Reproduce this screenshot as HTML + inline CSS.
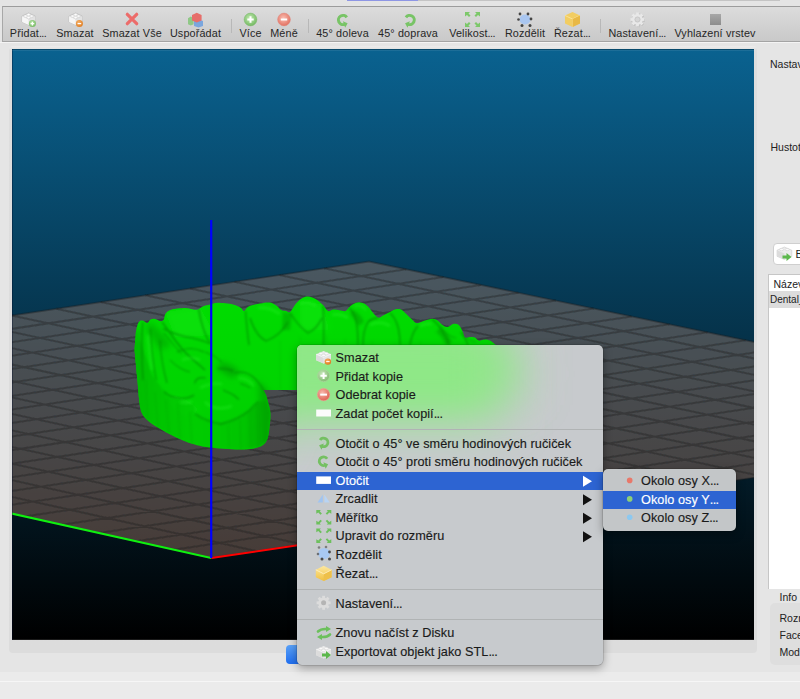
<!DOCTYPE html>
<html><head><meta charset="utf-8">
<style>
*{box-sizing:border-box}
html,body{margin:0;padding:0}
body{width:800px;height:699px;overflow:hidden;position:relative;background:#e5e5e5;font-family:"Liberation Sans",sans-serif;color:#1e1e1e}
.a{position:absolute}
.tl{position:absolute;top:28px;letter-spacing:0.15px;font-size:10.8px;line-height:11px;white-space:nowrap;color:#262626;text-align:center}
.sep{position:absolute;top:19px;width:1px;height:14px;background:#b8b8b8}
.mi{position:absolute;left:335.5px;font-size:12.7px;line-height:14px;white-space:nowrap;color:#1a1a1a;letter-spacing:0.05px;-webkit-text-stroke:0.15px currentColor}
.ic{position:absolute;left:315px;width:17px;height:17px}
.el{letter-spacing:-0.6px}
.rp{position:absolute;font-size:10.5px;line-height:12px;white-space:nowrap;color:#222}
</style></head>
<body>
<!-- top strip -->
<div class="a" style="left:0;top:0;width:800px;height:6px;background:#e4e4e4"></div>
<div class="a" style="left:347px;top:0;width:71px;height:1.2px;background:#8e96e4"></div>
<div class="a" style="left:418px;top:0;width:362px;height:1.2px;background:#c4c4c4"></div>
<!-- toolbar -->
<div class="a" style="left:2px;top:6px;width:798px;height:36px;border-top:1px solid #9c9c9c;border-left:1px solid #a8a8a8;border-bottom:1px solid #a4a4a4;background:linear-gradient(#dcdcdc,#c9c9c9)"></div>
<div class="a" style="left:0;top:42px;width:800px;height:1px;background:#f4f4f4"></div>

<!-- toolbar labels -->
<div class="tl" style="left:-22px;width:100px">Přidat<span class="el">...</span></div>
<div class="tl" style="left:25px;width:100px">Smazat</div>
<div class="tl" style="left:82px;width:100px">Smazat Vše</div>
<div class="tl" style="left:145.5px;width:100px">Uspořádat</div>
<div class="sep" style="left:231px"></div>
<div class="tl" style="left:200.5px;width:100px">Více</div>
<div class="tl" style="left:234px;width:100px">Méně</div>
<div class="sep" style="left:307.5px"></div>
<div class="tl" style="left:292.5px;width:100px">45° doleva</div>
<div class="tl" style="left:358px;width:100px">45° doprava</div>
<div class="tl" style="left:422px;width:100px">Velikost<span class="el">...</span></div>
<div class="tl" style="left:475px;width:100px">Rozdělit</div>
<div class="tl" style="left:522px;width:100px">Řezat<span class="el">...</span></div>
<div class="sep" style="left:600px"></div>
<div class="tl" style="left:587px;width:100px">Nastavení<span class="el">...</span></div>
<div class="tl" style="left:665px;width:100px">Vyhlazení vrstev</div>
<!-- toolbar icons -->
<svg class="a" style="left:0;top:0" width="800" height="45" viewBox="0 0 800 45">
<defs><filter id="tbl" x="-30%" y="-30%" width="160%" height="160%"><feGaussianBlur stdDeviation="0.35"/></filter>
<radialGradient id="gG" cx="0.45" cy="0.4" r="0.65"><stop offset="0" stop-color="#c4ecb4"/><stop offset="1" stop-color="#6cb45a"/></radialGradient>
<radialGradient id="gR" cx="0.45" cy="0.4" r="0.65"><stop offset="0" stop-color="#fac0b4"/><stop offset="1" stop-color="#e06a5a"/></radialGradient>
<radialGradient id="gO" cx="0.4" cy="0.35" r="0.7"><stop offset="0" stop-color="#f5b26a"/><stop offset="1" stop-color="#e07a1c"/></radialGradient>
<g id="brick">
<path d="M0.5 4.5 L7 1.5 L13.5 4.5 L13.5 10.5 L7 13.5 L0.5 10.5 Z" fill="#f2f2f2" stroke="#bdbdbd" stroke-width="0.9"/>
<path d="M0.5 4.5 L7 7.5 L7 13.5 L0.5 10.5Z" fill="#f6f6f6"/>
<path d="M7 7.5 L13.5 4.5 L13.5 10.5 L7 13.5Z" fill="#e2e2e2"/>
<path d="M0.5 4.5 L7 7.5 L13.5 4.5" fill="none" stroke="#d0d0d0" stroke-width="0.5"/>
<ellipse cx="4" cy="4.6" rx="1.8" ry="1.1" fill="#fff" stroke="#c8c8c8" stroke-width="0.5"/>
<ellipse cx="10" cy="4.6" rx="1.8" ry="1.1" fill="#fff" stroke="#c8c8c8" stroke-width="0.5"/>
<ellipse cx="7" cy="3.2" rx="1.8" ry="1.1" fill="#fff" stroke="#c8c8c8" stroke-width="0.5"/>
<ellipse cx="7" cy="6.2" rx="1.8" ry="1.1" fill="#fff" stroke="#c8c8c8" stroke-width="0.5"/>
</g>
</defs>
<use href="#brick" x="21.6" y="11.5" filter="url(#tbl)"/>
<circle cx="32.4" cy="23.6" r="3.5" fill="url(#gG)"/><path d="M30.6 23.6h3.6M32.4 21.8v3.6" stroke="#fff" stroke-width="1.2"/>
<use href="#brick" x="68.6" y="11.5" filter="url(#tbl)"/>
<circle cx="79.4" cy="23.6" r="3.5" fill="url(#gO)"/><path d="M77.6 23.6h3.6" stroke="#fff" stroke-width="1.2"/>
<path d="M127.3 14.3 L136.7 23.7 M136.7 14.3 L127.3 23.7" stroke="#ec6c6a" stroke-width="3.2" stroke-linecap="round" filter="url(#tbl)"/>
<!-- arrange cubes -->
<g filter="url(#tbl)">
<path d="M188 18.2 l2.8-1.6 2.8 1.6 v6 l-2.8 1.4 -2.8-1.4z" fill="#8fc886"/>
<path d="M194 21 l4.5-1.8 4.5 1.8 v5 l-4.5 1.6 -4.5-1.6z" fill="#7aa6de"/>
<path d="M192 15 l4.8-2.2 4.8 2.2 v5.5 l-4.8 2 -4.8-2z" fill="#e66e6a"/>
</g>
<circle cx="250.5" cy="19.5" r="6.4" fill="url(#gG)" stroke="#7fb86e" stroke-width="0.5"/><path d="M247.3 19.5h6.4M250.5 16.3v6.4" stroke="#fff" stroke-width="2"/>
<circle cx="284" cy="19.5" r="6.4" fill="url(#gR)" stroke="#e08a80" stroke-width="0.5"/><path d="M280.8 19.5h6.4" stroke="#fff" stroke-width="2"/>
<!-- rotate arrows -->
<g filter="url(#tbl)"><path d="M346.77 17.36 A4.6 4.6 0 1 0 344.57 24.32" fill="none" stroke="#78c466" stroke-width="3.0"/><path d="M347.62 23.21 L345.17 27.72 L342.85 21.33Z" fill="#78c466"/>
<path d="M405.93 17.36 A4.6 4.6 0 1 1 408.13 24.32" fill="none" stroke="#78c466" stroke-width="3.0"/><path d="M405.08 23.21 L407.53 27.72 L409.85 21.33Z" fill="#78c466"/></g>
<!-- velikost -->
<g fill="#7cc86a">
<path d="M465 12h5l-1.5 1.5 2 2-1.5 1.5-2-2-2 1.5z"/>
<path d="M480 12h-5l1.5 1.5-2 2 1.5 1.5 2-2 2 1.5z"/>
<path d="M465 27h5l-1.5-1.5 2-2-1.5-1.5-2 2-2-1.5z"/>
<path d="M480 27h-5l1.5-1.5-2-2 1.5-1.5 2 2 2-1.5z"/>
</g>
<!-- rozdelit -->
<ellipse cx="525" cy="19.5" rx="5.5" ry="5" fill="#a9c6f0"/>
<g fill="#444"><circle cx="520" cy="14" r="1.4"/><circle cx="528" cy="14" r="1.4"/><circle cx="531" cy="19" r="1.4"/><circle cx="530" cy="25.5" r="1.5"/><circle cx="522" cy="25.5" r="1.5"/><circle cx="518.5" cy="19.5" r="1.3"/></g>
<!-- rezat -->
<path d="M565 15.5 l7.5-3.5 7.5 3.5 v8 l-7.5 3.5 -7.5-3.5z" fill="#f2cd62"/>
<path d="M565 15.5 l7.5 3.5 7.5-3.5 M572.5 19 v8" fill="none" stroke="#fbe7a4" stroke-width="0.8"/>
<path d="M572.5 19 l7.5-3.5 v8 l-7.5 3.5z" fill="#e8b845"/>
<!-- gear -->
<g transform="translate(637.5,19.5)" filter="url(#tbl)">
<g fill="#b8b8b8" transform="translate(0.5,0.6)"><circle r="5.4"/>
<rect x="-1.4" y="-7" width="2.8" height="14"/><rect x="-1.4" y="-7" width="2.8" height="14" transform="rotate(45)"/><rect x="-1.4" y="-7" width="2.8" height="14" transform="rotate(90)"/><rect x="-1.4" y="-7" width="2.8" height="14" transform="rotate(135)"/></g>
<g fill="#e8e8e8"><circle r="5.4"/>
<rect x="-1.4" y="-7" width="2.8" height="14"/><rect x="-1.4" y="-7" width="2.8" height="14" transform="rotate(45)"/><rect x="-1.4" y="-7" width="2.8" height="14" transform="rotate(90)"/><rect x="-1.4" y="-7" width="2.8" height="14" transform="rotate(135)"/></g>
<circle r="2.6" fill="#d6d6d6" stroke="#bdbdbd" stroke-width="0.7"/>
</g>
<!-- square -->
<rect x="710" y="14" width="11" height="11" fill="url(#sqg)"/><linearGradient id="sqg" x1="0" y1="0" x2="0" y2="1"><stop offset="0" stop-color="#a8a8a8"/><stop offset="1" stop-color="#8c8c8c"/></linearGradient>
</svg>


<!-- canvas frame -->
<div class="a" style="left:9px;top:46px;width:748px;height:607px;border-radius:4px;background:linear-gradient(#ececec 0px,#dedede 4px,#dcdcdc)"></div>
<!-- bottom panel -->
<div class="a" style="left:0;top:672px;width:800px;height:27px;background:#ebebeb"></div>
<div class="a" style="left:0;top:681px;width:800px;height:1px;background:#f6f6f6"></div>

<!-- 3D canvas -->
<svg class="a" style="left:0;top:0" width="800" height="699" viewBox="0 0 800 699">
<defs>
<linearGradient id="bg" x1="0" y1="49" x2="0" y2="640" gradientUnits="userSpaceOnUse">
<stop offset="0" stop-color="rgb(10,98,144)"/><stop offset="1" stop-color="rgb(0,0,0)"/>
</linearGradient>
<filter id="gblur" x="-5%" y="-5%" width="110%" height="110%"><feGaussianBlur stdDeviation="0.5"/></filter><clipPath id="cc"><rect x="12" y="49" width="742" height="591"/></clipPath>
</defs>
<g clip-path="url(#cc)">
<rect x="12" y="49" width="742" height="591" fill="url(#bg)"/>
<polygon points="211.3,558.0 1133.6,421.4 369.0,261.5 -518.6,395.8" fill="rgba(168,125,105,0.42)" stroke="rgba(28,30,32,0.4)" stroke-width="1.8"/>
<path d="M257.0 551.2L-474.6 389.1M173.8 549.7L1094.2 413.1M302.7 544.5L-430.6 382.5M136.3 541.3L1055.0 404.9M348.4 537.7L-386.6 375.8M99.0 533.0L1015.9 396.8M394.2 530.9L-342.5 369.1M61.8 524.8L977.0 388.6M440.1 524.1L-298.4 362.4M24.7 516.5L938.1 380.5M486.0 517.3L-254.2 355.8M-12.2 508.3L899.4 372.4M531.9 510.5L-210.0 349.1M-49.1 500.1L860.7 364.3M577.9 503.7L-165.7 342.4M-85.9 491.9L822.2 356.3M623.9 496.9L-121.4 335.7M-122.5 483.8L783.8 348.2M670.0 490.0L-77.1 329.0M-159.1 475.7L745.6 340.2M716.2 483.2L-32.7 322.3M-195.5 467.6L707.4 332.3M762.3 476.4L11.8 315.5M-231.8 459.5L669.4 324.3M808.6 469.5L56.3 308.8M-268.0 451.5L631.4 316.4M854.9 462.7L100.8 302.1M-304.1 443.4L593.6 308.5M901.2 455.8L145.4 295.3M-340.2 435.4L555.9 300.6M947.6 448.9L190.0 288.6M-376.1 427.4L518.3 292.7M994.0 442.0L234.7 281.8M-411.8 419.5L480.8 284.9M1040.5 435.2L279.4 275.0M-447.5 411.6L443.4 277.1M1087.0 428.3L324.2 268.3M-483.1 403.6L406.2 269.3" stroke="rgba(28,30,32,0.36)" stroke-width="2" fill="none" filter="url(#gblur)"/>
<line x1="211.3" y1="558" x2="-498" y2="400" stroke="#10f010" stroke-width="2.2"/>
<line x1="211.3" y1="558" x2="590" y2="502" stroke="#ff0000" stroke-width="2"/>
<defs>
<linearGradient id="mg" x1="0" y1="300" x2="0" y2="450" gradientUnits="userSpaceOnUse">
<stop offset="0" stop-color="#00dc00"/><stop offset="0.6" stop-color="#00d400"/><stop offset="1" stop-color="#00cc00"/>
</linearGradient>
<linearGradient id="fg" x1="134" y1="0" x2="270" y2="0" gradientUnits="userSpaceOnUse">
<stop offset="0" stop-color="#00bc00"/><stop offset="0.45" stop-color="#00cc00"/><stop offset="0.8" stop-color="#00c400"/><stop offset="1" stop-color="#00a400"/>
</linearGradient>
<filter id="bl1" x="-20%" y="-20%" width="140%" height="140%"><feGaussianBlur stdDeviation="0.8"/></filter>
<filter id="bl2" x="-20%" y="-20%" width="140%" height="140%"><feGaussianBlur stdDeviation="1.8"/></filter>
<filter id="bl3" x="-30%" y="-30%" width="160%" height="160%"><feGaussianBlur stdDeviation="3"/></filter>
<clipPath id="mclip"><path d="M134.6 350.0C134.8 347.7 135.2 339.4 135.5 336.0C135.8 332.6 135.8 332.0 136.3 329.7C136.8 327.4 137.6 323.8 138.6 322.3C139.6 320.8 141.2 320.5 142.6 320.6C144.0 320.7 145.9 323.1 147.2 322.9C148.5 322.7 149.3 320.2 150.6 319.5C151.9 318.8 153.5 318.6 155.2 318.9C156.9 319.2 159.5 321.1 160.9 321.2C162.3 321.3 163.0 320.8 163.8 319.5C164.6 318.2 164.3 315.3 165.5 313.7C166.7 312.1 168.0 310.6 171.2 309.7C174.4 308.8 181.1 308.0 184.9 308.0C188.7 308.0 191.7 309.5 194.0 309.7C196.3 309.9 197.1 309.8 198.6 309.2C200.1 308.6 201.3 307.1 203.2 306.3C205.1 305.5 207.6 305.2 210.0 304.6C212.4 304.0 214.0 302.8 217.8 302.8C221.6 302.8 229.1 303.6 233.0 304.5C236.9 305.4 239.2 306.9 241.0 308.0C242.8 309.1 242.7 311.2 244.0 311.0C245.3 310.8 246.0 307.8 248.7 306.5C251.4 305.2 256.4 304.2 260.0 303.5C263.6 302.8 267.2 302.1 270.0 302.5C272.8 302.9 275.2 304.8 277.0 306.0C278.8 307.2 279.5 309.2 281.0 310.0C282.5 310.8 284.5 310.7 286.0 311.0C287.5 311.3 288.3 313.2 290.0 312.0C291.7 310.8 294.0 305.8 296.0 303.5C298.0 301.2 300.0 299.4 302.0 298.2C304.0 297.0 305.8 296.4 308.0 296.5C310.2 296.6 313.0 297.6 315.5 299.0C318.0 300.4 320.9 303.0 323.0 305.0C325.1 307.0 326.2 310.2 328.0 311.0C329.8 311.8 331.6 309.6 333.5 309.5C335.4 309.4 337.5 309.9 339.5 310.2C341.5 310.4 343.8 311.6 345.5 311.0C347.2 310.4 348.2 307.9 350.0 306.5C351.8 305.1 354.0 303.4 356.0 302.8C358.0 302.1 360.0 302.1 362.0 302.8C364.0 303.4 366.0 304.6 368.0 306.5C370.0 308.4 372.2 312.1 374.0 314.0C375.8 315.9 377.0 317.5 378.5 317.8C380.0 318.0 381.2 316.4 383.0 315.5C384.8 314.6 387.0 313.5 389.0 312.5C391.0 311.5 393.0 310.0 395.0 309.5C397.0 309.0 399.2 308.8 401.0 309.5C402.8 310.2 404.1 312.0 406.0 313.8C407.9 315.5 410.8 318.5 412.5 320.0C414.2 321.5 414.8 322.6 416.0 323.0C417.2 323.4 418.5 322.9 420.0 322.5C421.5 322.1 422.9 321.2 425.0 320.6C427.1 320.0 430.4 318.8 432.5 318.8C434.6 318.8 435.8 319.6 437.5 320.6C439.2 321.6 440.8 323.9 442.5 325.0C444.2 326.1 445.6 327.2 447.5 327.0C449.4 326.8 451.9 324.1 453.8 323.8C455.6 323.4 457.3 323.8 458.8 325.0C460.2 326.2 461.5 329.2 462.5 331.2C463.5 333.3 463.8 336.6 465.0 337.5C466.2 338.4 468.3 336.9 470.0 336.9C471.7 336.9 473.5 336.9 475.0 337.5C476.5 338.1 477.1 340.3 478.8 340.6C480.4 340.9 483.1 339.4 485.0 339.4C486.9 339.4 488.3 339.8 490.0 340.6C491.7 341.4 493.3 343.3 495.0 344.4C496.7 345.5 499.2 346.6 500.0 347.0L520 360L520 390L263.4 390C263.8 390.8 265.2 393.0 266.0 395.0C266.8 397.0 267.3 399.2 268.0 402.0C268.7 404.8 270.0 408.2 270.3 412.0C270.6 415.8 270.4 420.3 269.8 425.0C269.2 429.7 268.8 436.3 267.0 440.0C265.2 443.7 263.5 445.4 259.0 447.0C254.5 448.6 248.2 449.4 240.0 449.5C231.8 449.6 217.8 448.4 210.0 447.5C202.2 446.6 198.7 445.7 193.0 444.0C187.3 442.3 181.5 439.9 175.8 437.2C170.1 434.5 163.4 430.9 158.6 428.0C153.8 425.1 150.1 422.7 147.2 420.0C144.3 417.3 142.7 415.2 141.4 412.0C140.1 408.8 139.9 405.9 139.2 400.6C138.5 395.3 138.2 388.4 137.4 380.0C136.6 371.6 135.1 355.0 134.6 350.0Z"/></clipPath>
</defs>
<g clip-path="url(#mclip)">
<rect x="120" y="290" width="420" height="170" fill="url(#mg)"/>
<!-- broad shading -->
<g filter="url(#bl3)">
<path d="M130 330 L140 330 L145 420 L130 420Z" fill="#00b000" opacity="0.6"/>
<path d="M150 322 Q160 330 172 345 L160 350 Q152 338 146 328Z" fill="#009c00" opacity="0.55"/>
<path d="M220 362 Q232 364 240 372 L232 378 Q225 372 218 370Z" fill="#009000" opacity="0.6"/>
<path d="M258 380 L272 395 L272 445 L262 445Z" fill="#009800" opacity="0.55"/>
<path d="M165 312 L200 306 L215 335 L175 338Z" fill="#10e810" opacity="0.5"/>
<path d="M175 395 Q190 400 200 410 L185 420 Q170 410 165 400Z" fill="#10e410" opacity="0.5"/>
<path d="M300 300 L322 304 L330 330 L300 330Z" fill="#10e810" opacity="0.45"/>
</g>
<!-- outer face of left arm -->
<path fill="url(#fg)" d="M130 345 L137.4 380 L139.2 400.6 L141.4 412 L147.2 420 L158.6 428 L175.8 437.2 L193 444 L210 447.5 L240 449.5 L259 447 L267 440 L270 412 L265.5 400.8 L258.6 401.8 L250 410 L237.6 418 L221 424 L204.7 421 L195.2 414 L194 405 L181.5 400 L167.8 397 L164.3 391.4 L152 375 L145 355 L140 340Z" opacity="0.9" filter="url(#bl1)"/>
<g stroke="#029a02" stroke-width="1" opacity="0.3" filter="url(#bl1)">
<path d="M146 380 L148 420M155 392 L158 428M166 400 L169 434M178 404 L180 440M190 412 L192 445M228 425 L229 450M240 420 L241 450M250 412 L251 450M258 405 L259 448M264 402 L264 443"/>
</g>
<!-- back arch front face stripes -->
<g stroke="#04b004" stroke-width="1" opacity="0.3" filter="url(#bl1)">
<path d="M280 340 L280 390M300 336 L300 390M326 335 L326 390M345 338 L345 390M372 340 L372 390M395 342 L395 390M420 340 L420 390"/>
</g>
<!-- crowns of back arch -->
<g filter="url(#bl2)" opacity="0.5">
<path d="M283 312 L292 314 L290 330 L282 330Z" fill="#009c00"/>
<path d="M352 310 Q360 312 364 322 L358 326 Q354 318 350 314Z" fill="#009800"/>
<path d="M440 328 Q448 332 452 342 L446 345 Q442 336 436 332Z" fill="#009800"/>
</g>
<g fill="none" stroke="#028e02" stroke-width="1.3" opacity="0.8" filter="url(#bl1)">
<path d="M245.5 311 Q247 330 249 345"/>
<path d="M250 318 Q256 336 266 341 Q280 336 288 322"/>
<path d="M198.6 309.2 Q202 330 210 343.5"/>
<path d="M323 306 Q324 320 323.5 345"/>
<path d="M349 308 Q354 312 356.5 321 Q358 332 358 345"/>
<path d="M363 345 Q363 330 368 322 Q372 318 378 318"/>
<path d="M390 313 Q396 318 398.5 329 Q400 336 400 345"/>
<path d="M410 345 Q412 332 418 326"/>
<path d="M432 319 Q440 326 444 334 Q448 340 449 345"/>
<path d="M462 332 Q466 340 468 345"/>
<path d="M290 313 Q300 328 308 333 Q316 330 322 318"/>
</g>
<g fill="none" stroke="#30f530" stroke-width="2.2" opacity="0.45" filter="url(#bl2)">
<path d="M258 308 Q268 306 280 314"/>
<path d="M300 304 Q308 300 316 306"/>
<path d="M332 315 Q340 313 348 318"/>
<path d="M354 306 Q362 304 366 310"/>
<path d="M370 325 Q380 320 390 326"/>
<path d="M420 326 Q426 323 432 324"/>
</g>
<!-- left arm creases -->
<g fill="none" stroke="#028c02" opacity="0.8" filter="url(#bl1)">
<path stroke-width="1.3" d="M142.6 322 Q141 350 143 380"/>
<path stroke-width="1.1" d="M150.6 328.6 Q151 355 156.3 380"/>
<path stroke-width="1.1" d="M160 340 Q161 362 167 383"/>
<path stroke-width="1.4" d="M162 322 Q168 330 175 340 Q182 350 190 357 Q198 364 205 370"/>
<path stroke-width="1" d="M164 333 Q172 343 181.5 353.8"/>
<path stroke-width="1.2" d="M163 328.6 Q178 336 191.8 337.8 Q202 340 210 343.5"/>
<path stroke-width="1.2" d="M177 352 Q190 345 204 352"/>
<path stroke-width="1.2" d="M194.6 383.5 Q196 376 206 378"/>
<path stroke-width="1.4" d="M217.5 368.6 Q226 368 233.5 371"/>
<path stroke-width="1.2" d="M234.6 373 Q245 370 254 377.8 Q260 383 265.5 393.8"/>
<path stroke-width="1.1" d="M223 390 Q230 393 233.5 395 Q237 398 239 399.5"/>
<path stroke-width="1" d="M240 383.5 Q246 385 250.6 388"/>
<path stroke-width="1.3" d="M164.3 391.4 Q167 397 181.5 398.3 Q190 398 194 394.9"/>
<path stroke-width="1.3" d="M195.2 414 Q204.7 421 221 424 Q238 420 250 410 Q255 404 258.6 401.8"/>
<path stroke-width="1" d="M170 360 Q180 370 190 372"/>
<path stroke-width="1" d="M205 352 Q215 355 222 362"/>
</g>
<g fill="none" stroke="#30f530" stroke-width="2" opacity="0.45" filter="url(#bl2)">
<path d="M148 335 Q150 355 152 370"/>
<path d="M182 360 Q192 356 200 360"/>
<path d="M200 388 Q212 382 222 384"/>
<path d="M238 378 Q248 378 254 386"/>
<path d="M205 402 Q215 412 232 406"/>
<path d="M180 402 Q186 404 192 402"/>
</g>
<!-- front teeth right of canine -->
<g fill="none" stroke="#039603" stroke-width="1.1" opacity="0.6" filter="url(#bl1)">
<path d="M440 326 Q446 336 456 338"/>
<path d="M460 332 Q466 340 476 342"/>
</g>
</g>

<line x1="211.2" y1="220" x2="211.2" y2="558" stroke="#0000ff" stroke-width="2.2"/>
<rect x="12" y="639" width="742" height="1" fill="#1a1a1a"/><rect x="12" y="49" width="1" height="591" fill="rgba(0,10,40,0.35)"/><rect x="12" y="49" width="742" height="1" fill="rgba(0,0,0,0.25)"/><rect x="12" y="50" width="742" height="1" fill="rgba(255,255,255,0.08)"/>
</g>
</svg>

<!-- right panel -->
<div class="rp" style="left:770px;top:58px">Nastavení tisku</div>
<div class="rp" style="left:770.5px;top:141px">Hustota výplně</div>
<div class="a" style="left:773px;top:243px;width:40px;height:22px;border-radius:4px;background:#fff;border:1px solid #cfcfcf"></div>
<svg class="a" style="left:770px;top:240px" width="30" height="30" viewBox="770 240 30 30">
<path d="M777 250.2 L784.4 247 L791.8 250.2 L791.8 256.3 L784.4 259.5 L777 256.3 Z" fill="#ececec" stroke="#c4c4c4" stroke-width="0.5"/>
<path d="M777 250.2 L784.4 253.4 L784.4 259.5 L777 256.3Z" fill="#dcdcdc"/>
<ellipse cx="781.6" cy="249.6" rx="2" ry="1.1" fill="#fbfbfb" stroke="#c4c4c4" stroke-width="0.4"/>
<ellipse cx="787.2" cy="249.6" rx="2" ry="1.1" fill="#fbfbfb" stroke="#c4c4c4" stroke-width="0.4"/>
<path d="M782.5 255.5 h4 v-2.5 l5 4 -5 4 v-2.5 h-4z" fill="#5cb84c"/>
</svg>
<div class="rp" style="left:795.5px;top:248px;font-size:11px">Bez</div>
<div class="a" style="left:768px;top:274px;width:40px;height:315px;background:#fff;border-left:1px solid #c6c6c6;border-top:1px solid #c6c6c6"></div>
<div class="a" style="left:769px;top:291px;width:40px;height:17px;background:#dcdcdc"></div>
<div class="rp" style="left:773.5px;top:278px">Název</div>
<div class="rp" style="left:770px;top:294px;font-size:10px">Dental_arch</div>
<div class="rp" style="left:779.5px;top:591px">Info</div>
<div class="a" style="left:770px;top:603px;width:40px;height:62px;border-radius:5px;background:#dedede"></div>
<div class="rp" style="left:779.5px;top:612px">Rozměr</div>
<div class="rp" style="left:779.5px;top:629px">Facety</div>
<div class="rp" style="left:779.5px;top:646px">Model</div>

<!-- blue button under menu -->
<div class="a" style="left:286px;top:645px;width:40px;height:19px;border-radius:4px;background:linear-gradient(#5aa2f8,#1f6ef0)"></div>

<!-- main context menu -->
<div class="a" style="left:297px;top:345px;width:306px;height:320px;border-radius:5px;background:#c7cacd;box-shadow:0 3px 10px rgba(0,0,0,0.35), 0 0 0 0.5px rgba(0,0,0,0.2);overflow:hidden">
  <svg class="a" style="left:0;top:0" width="306" height="320" viewBox="297 345 306 320"><defs><filter id="mblur" x="-50%" y="-50%" width="200%" height="200%"><feGaussianBlur stdDeviation="24"/></filter></defs><path d="M134.6 350.0C134.8 347.7 135.2 339.4 135.5 336.0C135.8 332.6 135.8 332.0 136.3 329.7C136.8 327.4 137.6 323.8 138.6 322.3C139.6 320.8 141.2 320.5 142.6 320.6C144.0 320.7 145.9 323.1 147.2 322.9C148.5 322.7 149.3 320.2 150.6 319.5C151.9 318.8 153.5 318.6 155.2 318.9C156.9 319.2 159.5 321.1 160.9 321.2C162.3 321.3 163.0 320.8 163.8 319.5C164.6 318.2 164.3 315.3 165.5 313.7C166.7 312.1 168.0 310.6 171.2 309.7C174.4 308.8 181.1 308.0 184.9 308.0C188.7 308.0 191.7 309.5 194.0 309.7C196.3 309.9 197.1 309.8 198.6 309.2C200.1 308.6 201.3 307.1 203.2 306.3C205.1 305.5 207.6 305.2 210.0 304.6C212.4 304.0 214.0 302.8 217.8 302.8C221.6 302.8 229.1 303.6 233.0 304.5C236.9 305.4 239.2 306.9 241.0 308.0C242.8 309.1 242.7 311.2 244.0 311.0C245.3 310.8 246.0 307.8 248.7 306.5C251.4 305.2 256.4 304.2 260.0 303.5C263.6 302.8 267.2 302.1 270.0 302.5C272.8 302.9 275.2 304.8 277.0 306.0C278.8 307.2 279.5 309.2 281.0 310.0C282.5 310.8 284.5 310.7 286.0 311.0C287.5 311.3 288.3 313.2 290.0 312.0C291.7 310.8 294.0 305.8 296.0 303.5C298.0 301.2 300.0 299.4 302.0 298.2C304.0 297.0 305.8 296.4 308.0 296.5C310.2 296.6 313.0 297.6 315.5 299.0C318.0 300.4 320.9 303.0 323.0 305.0C325.1 307.0 326.2 310.2 328.0 311.0C329.8 311.8 331.6 309.6 333.5 309.5C335.4 309.4 337.5 309.9 339.5 310.2C341.5 310.4 343.8 311.6 345.5 311.0C347.2 310.4 348.2 307.9 350.0 306.5C351.8 305.1 354.0 303.4 356.0 302.8C358.0 302.1 360.0 302.1 362.0 302.8C364.0 303.4 366.0 304.6 368.0 306.5C370.0 308.4 372.2 312.1 374.0 314.0C375.8 315.9 377.0 317.5 378.5 317.8C380.0 318.0 381.2 316.4 383.0 315.5C384.8 314.6 387.0 313.5 389.0 312.5C391.0 311.5 393.0 310.0 395.0 309.5C397.0 309.0 399.2 308.8 401.0 309.5C402.8 310.2 404.1 312.0 406.0 313.8C407.9 315.5 410.8 318.5 412.5 320.0C414.2 321.5 414.8 322.6 416.0 323.0C417.2 323.4 418.5 322.9 420.0 322.5C421.5 322.1 422.9 321.2 425.0 320.6C427.1 320.0 430.4 318.8 432.5 318.8C434.6 318.8 435.8 319.6 437.5 320.6C439.2 321.6 440.8 323.9 442.5 325.0C444.2 326.1 445.6 327.2 447.5 327.0C449.4 326.8 451.9 324.1 453.8 323.8C455.6 323.4 457.3 323.8 458.8 325.0C460.2 326.2 461.5 329.2 462.5 331.2C463.5 333.3 463.8 336.6 465.0 337.5C466.2 338.4 468.3 336.9 470.0 336.9C471.7 336.9 473.5 336.9 475.0 337.5C476.5 338.1 477.1 340.3 478.8 340.6C480.4 340.9 483.1 339.4 485.0 339.4C486.9 339.4 488.3 339.8 490.0 340.6C491.7 341.4 493.3 343.3 495.0 344.4C496.7 345.5 499.2 346.6 500.0 347.0L520 360L520 390L263.4 390C263.8 390.8 265.2 393.0 266.0 395.0C266.8 397.0 267.3 399.2 268.0 402.0C268.7 404.8 270.0 408.2 270.3 412.0C270.6 415.8 270.4 420.3 269.8 425.0C269.2 429.7 268.8 436.3 267.0 440.0C265.2 443.7 263.5 445.4 259.0 447.0C254.5 448.6 248.2 449.4 240.0 449.5C231.8 449.6 217.8 448.4 210.0 447.5C202.2 446.6 198.7 445.7 193.0 444.0C187.3 442.3 181.5 439.9 175.8 437.2C170.1 434.5 163.4 430.9 158.6 428.0C153.8 425.1 150.1 422.7 147.2 420.0C144.3 417.3 142.7 415.2 141.4 412.0C140.1 408.8 139.9 405.9 139.2 400.6C138.5 395.3 138.2 388.4 137.4 380.0C136.6 371.6 135.1 355.0 134.6 350.0Z" fill="#8ee886" opacity="1" filter="url(#mblur)"/><rect x="250" y="330" width="250" height="90" fill="#8ee886" filter="url(#mblur)"/></svg>
  <div class="a" style="left:0;top:83.5px;width:306px;height:1px;background:#b0b3b4"></div>
  <div class="a" style="left:0;top:127px;width:306px;height:18px;background:#2d64d2"></div>
  <div class="a" style="left:0;top:243.5px;width:306px;height:1px;background:#b0b3b4"></div>
  <div class="a" style="left:0;top:273.5px;width:306px;height:1px;background:#b0b3b4"></div>
</div>
<div class="mi" style="top:351px">Smazat</div>
<div class="mi" style="top:369.5px">Přidat kopie</div>
<div class="mi" style="top:388px">Odebrat kopie</div>
<div class="mi" style="top:406.5px">Zadat počet kopií<span class="el">...</span></div>
<div class="mi" style="top:436.5px">Otočit o 45° ve směru hodinových ručiček</div>
<div class="mi" style="top:455px">Otočit o 45° proti směru hodinových ručiček</div>
<div class="mi" style="top:473.5px;color:#fff">Otočit</div>
<div class="mi" style="top:492px">Zrcadlit</div>
<div class="mi" style="top:510.5px">Měřítko</div>
<div class="mi" style="top:529px">Upravit do rozměru</div>
<div class="mi" style="top:548px">Rozdělit</div>
<div class="mi" style="top:566.5px">Řezat<span class="el">...</span></div>
<div class="mi" style="top:596.5px">Nastavení<span class="el">...</span></div>
<div class="mi" style="top:626px">Znovu načíst z Disku</div>
<div class="mi" style="top:644.5px">Exportovat objekt jako STL<span class="el">...</span></div>
<svg class="a" style="left:0;top:0" width="800" height="699" viewBox="0 0 800 699">
<defs><filter id="mtbl" x="-30%" y="-30%" width="160%" height="160%"><feGaussianBlur stdDeviation="0.3"/></filter>
<radialGradient id="mG" cx="0.4" cy="0.35" r="0.7"><stop offset="0" stop-color="#c8e8bc"/><stop offset="1" stop-color="#7cb86a"/></radialGradient>
<radialGradient id="mR" cx="0.4" cy="0.35" r="0.7"><stop offset="0" stop-color="#f8b8ac"/><stop offset="1" stop-color="#dc5c4c"/></radialGradient>
<radialGradient id="mO" cx="0.4" cy="0.35" r="0.7"><stop offset="0" stop-color="#f8b060"/><stop offset="1" stop-color="#e0741a"/></radialGradient>
<linearGradient id="mY" x1="0" y1="0" x2="0" y2="1"><stop offset="0" stop-color="#fde8a0"/><stop offset="1" stop-color="#f0c040"/></linearGradient>
<g id="mbrick">
<path d="M0 4.2 L7.4 1 L14.8 4.2 L14.8 10.3 L7.4 13.5 L0 10.3 Z" fill="#ececec"/>
<path d="M0 4.2 L7.4 7.4 L7.4 13.5 L0 10.3Z" fill="#dcdcdc"/>
<path d="M7.4 7.4 L14.8 4.2 L14.8 10.3 L7.4 13.5Z" fill="#e4e4e4"/>
<path d="M0 4.2 L7.4 7.4 L14.8 4.2" fill="none" stroke="#f8f8f8" stroke-width="0.7"/>
<ellipse cx="4.6" cy="3.6" rx="2" ry="1.1" fill="#fbfbfb" stroke="#cfcfcf" stroke-width="0.4"/>
<ellipse cx="10.2" cy="3.6" rx="2" ry="1.1" fill="#fbfbfb" stroke="#cfcfcf" stroke-width="0.4"/>
<ellipse cx="7.4" cy="5.4" rx="2" ry="1.1" fill="#fbfbfb" stroke="#cfcfcf" stroke-width="0.4"/>
</g>
<g id="mscale" fill="#6cc05c">
<path d="M0 0h4.6l-1.2 1.2 2.2 2.2-1.4 1.4-2.2-2.2-2 1.2z"/>
<path d="M15 0h-4.6l1.2 1.2-2.2 2.2 1.4 1.4 2.2-2.2 2 1.2z"/>
<path d="M0 14.5h4.6l-1.2-1.2 2.2-2.2-1.4-1.4-2.2 2.2-2-1.2z"/>
<path d="M15 14.5h-4.6l1.2-1.2-2.2-2.2 1.4-1.4 2.2 2.2 2-1.2z"/>
</g>
</defs>
<!-- Smazat -->
<use href="#mbrick" x="316.2" y="350"/>
<circle cx="327.9" cy="361.6" r="3.2" fill="url(#mO)"/><path d="M326.2 361.6h3.4" stroke="#fff" stroke-width="1"/>
<!-- Pridat kopie -->
<circle cx="323.6" cy="375.7" r="6" fill="url(#mG)" stroke="#a8d49a" stroke-width="0.8"/><path d="M320.4 375.7h6.4M323.6 372.5v6.4" stroke="#fff" stroke-width="2"/>
<!-- Odebrat -->
<circle cx="323.6" cy="394.6" r="6.2" fill="url(#mR)" stroke="#eca096" stroke-width="0.6"/><path d="M320.2 394.6h6.8" stroke="#fff" stroke-width="2"/>
<!-- Zadat -->
<rect x="316.2" y="409.5" width="14.8" height="7" fill="#fbfbfb"/>
<!-- rotate -->
<g filter="url(#mtbl)"><path d="M320.08 439.93 A4.3 4.3 0 1 1 322.13 446.44" fill="none" stroke="#74c062" stroke-width="2.8"/><path d="M319.08 445.33 L321.53 449.84 L323.86 443.45Z" fill="#74c062"/>
<path d="M327.12 458.73 A4.3 4.3 0 1 0 325.07 465.24" fill="none" stroke="#74c062" stroke-width="2.8"/><path d="M328.12 464.13 L325.67 468.64 L323.34 462.25Z" fill="#74c062"/></g>
<!-- Otocit rect -->
<rect x="316.2" y="476.4" width="14.8" height="7.5" fill="#ffffff"/>
<!-- Zrcadlit -->
<path d="M322.8 494.4 L322.8 502.4 L317.5 502.4Z" fill="#a0c4f0"/>
<path d="M324.4 494.4 L324.4 502.4 L329.7 502.4Z" fill="#b8d4f4"/>
<!-- Meritko / Upravit -->
<use href="#mscale" x="316.3" y="510"/>
<use href="#mscale" x="316.3" y="528.5"/>
<!-- Rozdelit -->
<ellipse cx="324" cy="553.5" rx="5.8" ry="5.5" fill="#a8c8f2"/>
<g fill="#4a4a4a"><circle cx="319" cy="547.5" r="1.3" opacity="0.6"/><circle cx="326" cy="547" r="1.3" opacity="0.6"/><circle cx="329.5" cy="552" r="1.4"/><circle cx="329.5" cy="559" r="1.5"/><circle cx="322" cy="559" r="1.5"/><circle cx="318" cy="554" r="1.3" opacity="0.7"/></g>
<!-- Rezat -->
<path d="M315.8 569.8 l7.9-4 7.9 4 v7.5 l-7.9 3.8 -7.9-3.8z" fill="url(#mY)"/>
<path d="M323.7 573.8 l7.9-4 v7.5 l-7.9 3.8z" fill="#eec04a"/>
<path d="M315.8 569.8 l7.9 4 7.9-4" fill="none" stroke="#fff3c8" stroke-width="0.8"/>
<!-- Nastaveni gear -->
<g transform="translate(323.6,602.8)">
<g fill="#dcdcdc"><circle r="5.3"/>
<rect x="-1.4" y="-7" width="2.8" height="14"/><rect x="-1.4" y="-7" width="2.8" height="14" transform="rotate(45)"/><rect x="-1.4" y="-7" width="2.8" height="14" transform="rotate(90)"/><rect x="-1.4" y="-7" width="2.8" height="14" transform="rotate(135)"/></g>
<circle r="2.5" fill="#b4b4b4"/>
</g>
<!-- Znovu nacist -->
<g fill="none" stroke="#6cc05c" stroke-width="2.6" stroke-linecap="round">
<path d="M318 631.5 Q321 628.5 327 629"/>
<path d="M330 634.5 Q327 637.5 321 637"/>
</g>
<path d="M326 626 L331 629 L326 632Z" fill="#6cc05c"/>
<path d="M322 634 L317 637 L322 640Z" fill="#6cc05c"/>
<!-- Export -->
<use href="#mbrick" x="316.2" y="645"/>
<path d="M322 653.5 h4 v-2.5 l5 4 -5 4 v-2.5 h-4z" fill="#5cb84c"/>
</svg>

<!-- submenu arrows -->
<svg class="a" style="left:0;top:0" width="800" height="699" viewBox="0 0 800 699">
<path d="M583 475.7 L592 481.2 L583 486.7Z" fill="#fff"/>
<path d="M583 494.2 L592 499.7 L583 505.2Z" fill="#111"/>
<path d="M583 512.7 L592 518.2 L583 523.7Z" fill="#111"/>
<path d="M583 531.2 L592 536.7 L583 542.2Z" fill="#111"/>
</svg>
<!-- submenu -->
<div class="a" style="left:603px;top:468.5px;width:133px;height:62.5px;border-radius:5px;background:#c3c6c8;box-shadow:0 3px 10px rgba(0,0,0,0.35), 0 0 0 0.5px rgba(0,0,0,0.2);overflow:hidden">
  <div class="a" style="left:0;top:22px;width:133px;height:18px;background:#2d64d2"></div>
</div>
<div class="mi" style="left:641px;top:474px">Okolo osy X<span class="el">...</span></div>
<div class="mi" style="left:641px;top:492.5px;color:#fff">Okolo osy Y<span class="el">...</span></div>
<div class="mi" style="left:641px;top:511px">Okolo osy Z<span class="el">...</span></div>
<svg class="a" style="left:600px;top:460px" width="60" height="80" viewBox="600 460 60 80">
<circle cx="629.7" cy="480.4" r="2.8" fill="#e8786a"/>
<circle cx="629.7" cy="498.9" r="2.8" fill="#8ccf78"/>
<circle cx="629.7" cy="517.2" r="2.8" fill="#8cc8f0"/>
</svg>

</body></html>
